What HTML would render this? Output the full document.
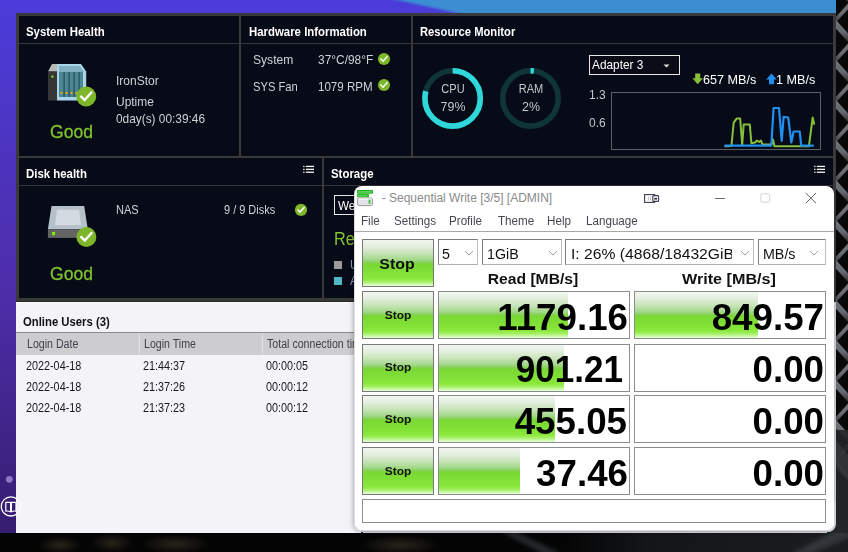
<!DOCTYPE html>
<html><head><meta charset="utf-8">
<style>
*{margin:0;padding:0;box-sizing:border-box}
html,body{width:848px;height:552px;overflow:hidden;background:#000}
body{position:relative;font-family:"Liberation Sans",sans-serif}
.a{position:absolute}
.t{position:absolute;line-height:1;white-space:nowrap}
svg{position:absolute;overflow:visible}
</style></head><body>
<div class="a" style="left:0px;top:0px;width:848px;height:552px;background:linear-gradient(180deg,#4b3cda 0%,#4d32b8 35%,#4e2da8 54%,#371e73 94%,#341c6c 100%)"></div>
<svg style="left:0;top:0" width="848" height="20"><defs><linearGradient id="bl" x1="0" x2="1"><stop offset="0" stop-color="#3f86d8"/><stop offset="1" stop-color="#3a8fd8"/></linearGradient></defs><filter id="bf" x="-5%" y="-50%" width="110%" height="200%"><feGaussianBlur stdDeviation="1.2"/></filter><path d="M379 -4 L852 -4 L852 20 L489 20Z" fill="#3a8ed2" filter="url(#bf)"/></svg>
<svg style="left:836px;top:0;overflow:hidden" width="12" height="552"><defs><clipPath id="rc"><rect width="12" height="552"/></clipPath><linearGradient id="rg" x1="0" y1="0" x2="0" y2="1"><stop offset="0" stop-color="#8c9299"/><stop offset="0.55" stop-color="#7c8288"/><stop offset="1" stop-color="#3a3d40"/></linearGradient></defs><g clip-path="url(#rc)"><rect width="12" height="552" fill="#080808"/><g stroke="url(#rg)" fill="none" opacity="0.8"><path d="M-4 -60 L16 -38" stroke-width="6"/><path d="M-4 -16 L16 -38" stroke-width="4"/><path d="M-4 -20 L16 2" stroke-width="6"/><path d="M-4 24 L16 2" stroke-width="4"/><path d="M-4 20 L16 42" stroke-width="6"/><path d="M-4 64 L16 42" stroke-width="4"/><path d="M-4 60 L16 82" stroke-width="6"/><path d="M-4 104 L16 82" stroke-width="4"/><path d="M-4 100 L16 122" stroke-width="6"/><path d="M-4 144 L16 122" stroke-width="4"/><path d="M-4 140 L16 162" stroke-width="6"/><path d="M-4 184 L16 162" stroke-width="4"/><path d="M-4 180 L16 202" stroke-width="6"/><path d="M-4 224 L16 202" stroke-width="4"/><path d="M-4 220 L16 242" stroke-width="6"/><path d="M-4 264 L16 242" stroke-width="4"/><path d="M-4 260 L16 282" stroke-width="6"/><path d="M-4 304 L16 282" stroke-width="4"/><path d="M-4 300 L16 322" stroke-width="6"/><path d="M-4 344 L16 322" stroke-width="4"/><path d="M-4 340 L16 362" stroke-width="6"/><path d="M-4 384 L16 362" stroke-width="4"/><path d="M-4 380 L16 402" stroke-width="6"/><path d="M-4 424 L16 402" stroke-width="4"/><path d="M-4 420 L16 442" stroke-width="6"/><path d="M-4 464 L16 442" stroke-width="4"/><path d="M-4 460 L16 482" stroke-width="6"/><path d="M-4 504 L16 482" stroke-width="4"/><path d="M-4 500 L16 522" stroke-width="6"/><path d="M-4 544 L16 522" stroke-width="4"/><path d="M-4 540 L16 562" stroke-width="6"/><path d="M-4 584 L16 562" stroke-width="4"/></g><rect y="430" width="12" height="122" fill="#232527" opacity="0.9"/><path d="M0 440 L12 455 L12 480 L0 465Z" fill="#3a3c3e" opacity="0.6"/></g></svg>
<div class="a" style="left:0px;top:533px;width:848px;height:19px;background:#040404"></div>
<svg style="left:0;top:533px" width="848" height="19"><defs><radialGradient id="bg1"><stop offset="0" stop-color="#2c271e" stop-opacity="0.9"/><stop offset="1" stop-color="#2c271e" stop-opacity="0"/></radialGradient><linearGradient id="bg2" x1="0" x2="1"><stop offset="0" stop-color="#040404"/><stop offset="0.3" stop-color="#131517"/><stop offset="1" stop-color="#1b1d1f"/></linearGradient><filter id="bb"><feGaussianBlur stdDeviation="2"/></filter></defs><rect x="560" y="0" width="288" height="19" fill="url(#bg2)"/><ellipse cx="60" cy="12" rx="22" ry="9" fill="url(#bg1)"/><ellipse cx="112" cy="10" rx="22" ry="10" fill="url(#bg1)"/><ellipse cx="175" cy="11" rx="35" ry="10" fill="url(#bg1)"/><ellipse cx="400" cy="12" rx="40" ry="10" fill="url(#bg1)"/><path d="M500 -2 L514 -2 L562 21 L544 21Z" fill="#596068" opacity="0.4" filter="url(#bb)"/><path d="M790 21 L850 -10 L850 4 L812 21Z" fill="#50555a" opacity="0.45" filter="url(#bb)"/></svg>
<div class="a" style="left:16px;top:13px;width:820px;height:289px;background:#393939"></div>
<div class="a" style="left:16px;top:301px;width:820px;height:1px;background:#262626"></div>
<div class="a" style="left:19px;top:16px;width:220px;height:140px;background:#070a17"></div>
<div class="a" style="left:241px;top:16px;width:170px;height:140px;background:#070a17"></div>
<div class="a" style="left:413px;top:16px;width:420px;height:140px;background:#070a17"></div>
<div class="a" style="left:19px;top:158px;width:303px;height:140px;background:#070a17"></div>
<div class="a" style="left:324px;top:158px;width:509px;height:140px;background:#070a17"></div>
<div class="a" style="left:19px;top:43px;width:220px;height:1px;background:#36373e"></div>
<div class="a" style="left:241px;top:43px;width:170px;height:1px;background:#36373e"></div>
<div class="a" style="left:413px;top:43px;width:420px;height:1px;background:#36373e"></div>
<div class="a" style="left:19px;top:185px;width:303px;height:1px;background:#36373e"></div>
<div class="a" style="left:324px;top:185px;width:509px;height:1px;background:#36373e"></div>
<div class="t" style="left:26px;top:25.00px;font-size:13px;color:#fff;font-weight:bold;transform:scaleX(0.878);transform-origin:0 0;">System Health</div>
<div class="t" style="left:116px;top:74.00px;font-size:13px;color:#cfd2d6;transform:scaleX(0.925);transform-origin:0 0;">IronStor</div>
<div class="t" style="left:116px;top:95.00px;font-size:13px;color:#cfd2d6;transform:scaleX(0.92);transform-origin:0 0;">Uptime</div>
<div class="t" style="left:116px;top:112.00px;font-size:13px;color:#cfd2d6;transform:scaleX(0.913);transform-origin:0 0;">0day(s) 00:39:46</div>
<div class="t" style="left:49.8px;top:121.62px;font-size:19px;color:#7fc42e;transform:scaleX(0.925);transform-origin:0 0;-webkit-text-stroke:0.3px #7fc42e;">Good</div>
<svg style="left:0;top:0" width="120" height="120"><path d="M48 71.6 L52 64 L57 64 L57 71.6Z" fill="#b8b8b8"/><rect x="48" y="71.6" width="9" height="29" fill="#363636"/><circle cx="52.4" cy="76.6" r="1.3" fill="#6ccc28"/><path d="M57 64 L81 64 L86.2 71.6 L86.2 100.6 L57 100.6Z" fill="#a9d5ea"/><path d="M59 66 L80 66 L84 72 L59 72Z" fill="#7fb0bf"/><rect x="59" y="72" width="24" height="25" fill="#4d8794"/><rect x="63.5" y="72" width="1.2" height="25" fill="#1e4f58"/><rect x="68.5" y="72" width="1.2" height="25" fill="#1e4f58"/><rect x="73.5" y="72" width="1.2" height="25" fill="#1e4f58"/><rect x="78.5" y="72" width="1.2" height="25" fill="#1e4f58"/><rect x="60.5" y="92" width="2" height="2" fill="#f0a800"/><rect x="65.5" y="92" width="2" height="2" fill="#f0a800"/><rect x="70.5" y="92" width="2" height="2" fill="#f0a800"/><rect x="75.5" y="92" width="2" height="2" fill="#f0a800"/><circle cx="86.2" cy="96.5" r="10" fill="#7db52b"/><path d="M81.20 96.70 L84.60 100.10 L91.20 92.70" stroke="#fff" stroke-width="2.40" fill="none" stroke-linecap="square"/></svg>
<div class="t" style="left:248.5px;top:25.00px;font-size:13px;color:#fff;font-weight:bold;transform:scaleX(0.877);transform-origin:0 0;">Hardware Information</div>
<div class="t" style="left:253.4px;top:53.00px;font-size:13px;color:#cfd2d6;transform:scaleX(0.93);transform-origin:0 0;">System</div>
<div class="t" style="left:317.8px;top:53.00px;font-size:13px;color:#cfd2d6;transform:scaleX(0.917);transform-origin:0 0;">37°C/98°F</div>
<div class="t" style="left:253.4px;top:79.70px;font-size:13px;color:#cfd2d6;transform:scaleX(0.86);transform-origin:0 0;">SYS Fan</div>
<div class="t" style="left:317.8px;top:79.70px;font-size:13px;color:#cfd2d6;transform:scaleX(0.89);transform-origin:0 0;">1079 RPM</div>
<svg style="left:0;top:0" width="400" height="100"><circle cx="384" cy="59" r="6.1" fill="#7db52b"/><path d="M380.95 59.12 L383.02 61.20 L387.05 56.68" stroke="#fff" stroke-width="1.46" fill="none" stroke-linecap="square"/><circle cx="384" cy="85" r="6.1" fill="#7db52b"/><path d="M380.95 85.12 L383.02 87.20 L387.05 82.68" stroke="#fff" stroke-width="1.46" fill="none" stroke-linecap="square"/></svg>
<div class="t" style="left:420.3px;top:25.00px;font-size:13px;color:#fff;font-weight:bold;transform:scaleX(0.862);transform-origin:0 0;">Resource Monitor</div>
<svg style="left:0;top:0" width="600" height="140"><circle cx="452.6" cy="98.4" r="27.7" fill="none" stroke="#0f3539" stroke-width="5.6"/><circle cx="452.6" cy="98.4" r="27.7" fill="none" stroke="#2fd6da" stroke-width="5.6" stroke-dasharray="137.49 174.04" transform="rotate(-90 452.6 98.4)"/><circle cx="530.5" cy="98.4" r="27.7" fill="none" stroke="#0f3539" stroke-width="5.6"/><circle cx="530.5" cy="98.4" r="27.7" fill="none" stroke="#2fd6da" stroke-width="5.6" stroke-dasharray="3.48 174.04" transform="rotate(-90 530.5 98.4)"/></svg>
<div class="t" style="left:252.60000000000002px;width:400px;text-align:center;top:82.94px;font-size:12px;color:#c4c6ca;transform:scaleX(0.92);transform-origin:50% 0;">CPU</div>
<div class="t" style="left:252.60000000000002px;width:400px;text-align:center;top:99.67px;font-size:13.5px;color:#c4c6ca;transform:scaleX(0.92);transform-origin:50% 0;">79%</div>
<div class="t" style="left:330.5px;width:400px;text-align:center;top:82.94px;font-size:12px;color:#c4c6ca;transform:scaleX(0.92);transform-origin:50% 0;">RAM</div>
<div class="t" style="left:330.5px;width:400px;text-align:center;top:99.67px;font-size:13.5px;color:#c4c6ca;transform:scaleX(0.92);transform-origin:50% 0;">2%</div>
<div class="a" style="left:589px;top:55px;width:91px;height:20px;border:1px solid #e8e8e8;background:#0a0b16"></div>
<div class="t" style="left:592.4px;top:58.00px;font-size:13px;color:#fff;transform:scaleX(0.91);transform-origin:0 0;">Adapter 3</div>
<svg style="left:0;top:0" width="700" height="100"><path d="M663.5 64.5 L669.5 64.5 L666.5 67.5Z" fill="#ddd"/></svg>
<svg style="left:0;top:0" width="800" height="100"><path d="M695.2 73.5 L700.2 73.5 L700.2 78.2 L703 78.2 L697.7 84.3 L692.4 78.2 L695.2 78.2Z" fill="#86c03a"/><path d="M769 84.3 L774 84.3 L774 79.6 L776.8 79.6 L771.5 73.5 L766.2 79.6 L769 79.6Z" fill="#1f8ff0"/></svg>
<div class="t" style="left:703.4px;top:73.10px;font-size:13px;color:#fff;transform:scaleX(0.97);transform-origin:0 0;">657 MB/s</div>
<div class="t" style="left:776.4px;top:73.10px;font-size:13px;color:#fff;transform:scaleX(0.97);transform-origin:0 0;">1 MB/s</div>
<div class="t" style="left:589px;top:88.00px;font-size:13px;color:#c4c6ca;transform:scaleX(0.92);transform-origin:0 0;">1.3</div>
<div class="t" style="left:589px;top:116.00px;font-size:13px;color:#c4c6ca;transform:scaleX(0.92);transform-origin:0 0;">0.6</div>
<div class="a" style="left:611px;top:92px;width:210px;height:58px;border:1px solid #5a6068"></div>
<svg style="left:0;top:0" width="848" height="160"><polyline points="724.5,146.3 731.4,146.0 733.7,122.6 736.8,118.4 740.2,118.6 742.2,144.8 743.7,124.6 749.8,124.6 751.4,143.3 755.0,142.5 757.0,140.5 759.0,142.0 761.0,140.5 762.5,144.5 771.3,144.5 773.0,139.4 774.5,146.3 808.9,146.3 812.7,117.5 814.3,124.6" fill="none" stroke="#86c03a" stroke-width="2" stroke-linejoin="round"/><polyline points="724.5,145.6 771.3,145.6 773.6,108.0 779.0,108.0 781.7,141.0 783.6,116.9 788.2,117.5 791.3,142.5 793.6,131.5 799.7,131.5 801.2,145.6 813.8,145.6" fill="none" stroke="#1f8ff0" stroke-width="2.2" stroke-linejoin="round"/></svg>
<div class="t" style="left:26px;top:166.70px;font-size:13px;color:#fff;font-weight:bold;transform:scaleX(0.878);transform-origin:0 0;">Disk health</div>
<svg style="left:0;top:0" width="848" height="200"><rect x="303.2" y="165.80" width="1.3" height="1.3" fill="#fff"/><rect x="305.8" y="165.80" width="8.2" height="1.25" fill="#fff"/><rect x="303.2" y="168.70" width="1.3" height="1.3" fill="#fff"/><rect x="305.8" y="168.70" width="8.2" height="1.25" fill="#fff"/><rect x="303.2" y="171.60" width="1.3" height="1.3" fill="#fff"/><rect x="305.8" y="171.60" width="8.2" height="1.25" fill="#fff"/><rect x="814.2" y="165.80" width="1.3" height="1.3" fill="#fff"/><rect x="816.8" y="165.80" width="8.2" height="1.25" fill="#fff"/><rect x="814.2" y="168.70" width="1.3" height="1.3" fill="#fff"/><rect x="816.8" y="168.70" width="8.2" height="1.25" fill="#fff"/><rect x="814.2" y="171.60" width="1.3" height="1.3" fill="#fff"/><rect x="816.8" y="171.60" width="8.2" height="1.25" fill="#fff"/></svg>
<div class="t" style="left:116.4px;top:203.84px;font-size:12px;color:#cfd2d6;transform:scaleX(0.92);transform-origin:0 0;">NAS</div>
<div class="t" style="left:224.2px;top:203.84px;font-size:12px;color:#cfd2d6;transform:scaleX(0.913);transform-origin:0 0;">9 / 9 Disks</div>
<svg style="left:0;top:0" width="400" height="300"><path d="M51.5 206 L84.2 206 L87.8 229.3 L47.9 229.3Z" fill="#b5c0c8"/><path d="M57 209.8 L79 209.8 L81 225 L55.1 225Z" fill="#d3dae0"/><rect x="47.9" y="229.3" width="39.9" height="8.6" fill="#646464"/><rect x="52" y="232" width="3.1" height="3.2" fill="#78f000"/><circle cx="86.4" cy="237" r="10" fill="#7db52b"/><path d="M81.40 237.20 L84.80 240.60 L91.40 233.20" stroke="#fff" stroke-width="2.40" fill="none" stroke-linecap="square"/><circle cx="301" cy="209.9" r="6.1" fill="#7db52b"/><path d="M297.95 210.02 L300.02 212.10 L304.05 207.58" stroke="#fff" stroke-width="1.46" fill="none" stroke-linecap="square"/></svg>
<div class="t" style="left:49.8px;top:263.62px;font-size:19px;color:#7fc42e;transform:scaleX(0.925);transform-origin:0 0;-webkit-text-stroke:0.3px #7fc42e;">Good</div>
<div class="t" style="left:331px;top:166.50px;font-size:13px;color:#fff;font-weight:bold;transform:scaleX(0.878);transform-origin:0 0;">Storage</div>
<div class="a" style="left:334px;top:195px;width:40px;height:20px;border:1px solid #e8e8e8"></div>
<div class="t" style="left:338px;top:199.00px;font-size:13px;color:#fff;transform:scaleX(0.9);transform-origin:0 0;">We</div>
<div class="t" style="left:333.6px;top:229.76px;font-size:18px;color:#7fc42e;transform:scaleX(0.9);transform-origin:0 0;">Re</div>
<div class="a" style="left:334px;top:261px;width:8px;height:8px;background:#9a9a9a"></div>
<div class="a" style="left:334px;top:277px;width:8px;height:8px;background:#4fb8c4"></div>
<div class="t" style="left:350px;top:258.00px;font-size:13px;color:#8aa0c0;transform:scaleX(0.9);transform-origin:0 0;">U</div>
<div class="t" style="left:350px;top:274.00px;font-size:13px;color:#8aa0c0;transform:scaleX(0.9);transform-origin:0 0;">A</div>
<div class="a" style="left:16px;top:302px;width:345px;height:231px;background:#f3f3f8"></div>
<div class="a" style="left:16px;top:302px;width:345px;height:1px;background:#fcfcff"></div>
<div class="t" style="left:23px;top:314.70px;font-size:13px;color:#111;font-weight:bold;transform:scaleX(0.87);transform-origin:0 0;">Online Users (3)</div>
<div class="a" style="left:16px;top:332px;width:345px;height:1px;background:#8a8a8a"></div>
<div class="a" style="left:16px;top:333px;width:345px;height:22px;background:#cdcdcf"></div>
<div class="a" style="left:139px;top:333px;width:1px;height:22px;background:#e2e2e4"></div>
<div class="a" style="left:262px;top:333px;width:1px;height:22px;background:#e2e2e4"></div>
<div class="t" style="left:27.2px;top:338.34px;font-size:12px;color:#40404a;transform:scaleX(0.885);transform-origin:0 0;">Login Date</div>
<div class="t" style="left:144px;top:338.34px;font-size:12px;color:#40404a;transform:scaleX(0.885);transform-origin:0 0;">Login Time</div>
<div class="t" style="left:267px;top:338.34px;font-size:12px;color:#40404a;transform:scaleX(0.885);transform-origin:0 0;">Total connection time</div>
<div class="t" style="left:26px;top:360.04px;font-size:12px;color:#16161e;transform:scaleX(0.9);transform-origin:0 0;">2022-04-18</div>
<div class="t" style="left:143px;top:360.04px;font-size:12px;color:#16161e;transform:scaleX(0.9);transform-origin:0 0;">21:44:37</div>
<div class="t" style="left:266px;top:360.04px;font-size:12px;color:#16161e;transform:scaleX(0.9);transform-origin:0 0;">00:00:05</div>
<div class="t" style="left:26px;top:381.04px;font-size:12px;color:#16161e;transform:scaleX(0.9);transform-origin:0 0;">2022-04-18</div>
<div class="t" style="left:143px;top:381.04px;font-size:12px;color:#16161e;transform:scaleX(0.9);transform-origin:0 0;">21:37:26</div>
<div class="t" style="left:266px;top:381.04px;font-size:12px;color:#16161e;transform:scaleX(0.9);transform-origin:0 0;">00:00:12</div>
<div class="t" style="left:26px;top:402.04px;font-size:12px;color:#16161e;transform:scaleX(0.9);transform-origin:0 0;">2022-04-18</div>
<div class="t" style="left:143px;top:402.04px;font-size:12px;color:#16161e;transform:scaleX(0.9);transform-origin:0 0;">21:37:23</div>
<div class="t" style="left:266px;top:402.04px;font-size:12px;color:#16161e;transform:scaleX(0.9);transform-origin:0 0;">00:00:12</div>
<svg style="left:0;top:0" width="40" height="552"><circle cx="9.3" cy="479.3" r="3.4" fill="#8a78c4"/><circle cx="10.9" cy="506.4" r="9.6" fill="none" stroke="#fff" stroke-width="1.3"/><path d="M5.8 502.3 L10.6 502.3 L10.6 511.8 Q8.2 510.6 5.8 511.2Z M11.4 502.3 L16 502.3 L16 511.2 Q13.6 510.6 11.4 511.8Z" fill="none" stroke="#fff" stroke-width="1.2" stroke-linejoin="round"/></svg>
<div class="a" style="left:800px;top:480px;width:48px;height:53px;background:#232527"></div>
<div class="a" style="left:834px;top:302px;width:2px;height:222px;background:#cfcfd3"></div>
<div class="a" style="left:354px;top:186px;width:480px;height:346px;border-radius:8px;box-shadow:-1px 0 5px rgba(0,0,0,0.28)"></div>
<div class="a" style="left:354px;top:186px;width:482px;height:346px;border-radius:8px;background:#cfcfd3;clip-path:inset(316px 0 0 0)"></div>
<div class="a" style="left:354px;top:186px;width:480px;height:345px;border-radius:8px;background:#ffffff;border:1px solid #dcdce0;border-right:none;border-top:none"></div>
<svg style="left:0;top:0" width="400" height="220"><rect x="357" y="190" width="16" height="3.8" rx="0.8" fill="#20b420"/><rect x="358" y="191.3" width="14" height="1.2" fill="#8fe08f" opacity="0.8"/><rect x="357" y="194" width="12" height="3.2" rx="0.6" fill="#26ba26"/><rect x="358" y="195.2" width="9" height="1.1" fill="#8fe08f" opacity="0.7"/><rect x="357.4" y="198" width="15.2" height="7.6" rx="1.8" fill="#e2e2ea" stroke="#909090" stroke-width="0.9"/><rect x="358.5" y="198.4" width="13" height="1.6" fill="#f4f4f8"/><rect x="368.6" y="199.6" width="1.8" height="4.2" fill="#3cbf3c"/></svg>
<div class="t" style="left:381.7px;top:192.34px;font-size:12px;color:#8a8a8a;">- Sequential Write [3/5] [ADMIN]</div>
<svg style="left:0;top:0" width="848" height="220"><rect x="644.6" y="194.6" width="10" height="7.8" fill="none" stroke="#3a3d50" stroke-width="1.1"/><line x1="648.4" y1="196.5" x2="648.4" y2="200.5" stroke="#9a9ca8" stroke-width="0.6"/><line x1="650.6" y1="196.5" x2="650.6" y2="200.5" stroke="#9a9ca8" stroke-width="0.6"/><rect x="652.8" y="195.6" width="5.8" height="5.8" rx="1" fill="#fff" stroke="#3a3d50" stroke-width="1.1"/><rect x="654.2" y="197.8" width="3" height="1.8" fill="#3a3d50"/><line x1="715" y1="198.5" x2="725" y2="198.5" stroke="#6e6e6e" stroke-width="1"/><rect x="760.8" y="193.8" width="8.8" height="8.4" rx="1.3" fill="none" stroke="#d6d6d6" stroke-width="1"/><path d="M805.8 193 L816 203.2 M816 193 L805.8 203.2" stroke="#5a5a5a" stroke-width="0.95"/></svg>
<div class="t" style="left:361px;top:214.74px;font-size:12px;color:#474754;transform:scaleX(0.97);transform-origin:0 0;">File</div>
<div class="t" style="left:393.6px;top:214.74px;font-size:12px;color:#474754;transform:scaleX(0.97);transform-origin:0 0;">Settings</div>
<div class="t" style="left:449.4px;top:214.74px;font-size:12px;color:#474754;transform:scaleX(0.97);transform-origin:0 0;">Profile</div>
<div class="t" style="left:497.8px;top:214.74px;font-size:12px;color:#474754;transform:scaleX(0.97);transform-origin:0 0;">Theme</div>
<div class="t" style="left:547px;top:214.74px;font-size:12px;color:#474754;transform:scaleX(0.97);transform-origin:0 0;">Help</div>
<div class="t" style="left:586px;top:214.74px;font-size:12px;color:#474754;transform:scaleX(0.97);transform-origin:0 0;">Language</div>
<div class="a" style="left:354px;top:231px;width:480px;height:1px;background:#a8a8a8"></div>
<div class="a" style="left:355px;top:232px;width:479px;height:298px;background:#ffffff;border-radius:0 0 7px 7px"></div>
<div class="a" style="left:362px;top:531px;width:466px;height:1px;background:#b4b4b8"></div>
<div class="a" style="left:363px;top:532px;width:464px;height:1px;background:#c6c6cc"></div>
<div class="a" style="left:362px;top:239px;width:72px;height:48px;border:1px solid #787878;background:linear-gradient(180deg,#f2f5f0 0%,#e4efdf 14%,#c6e3b6 30%,#a2d889 43%,#86d256 49%,#7ad834 53%,#80df36 68%,#8ae83a 84%,#a6ef68 91%,#d2fbb8 97%,#e6ffd8 100%)"></div>
<div class="t" style="left:197.39999999999998px;width:400px;text-align:center;top:256.10px;font-size:15px;color:#111;font-weight:bold;transform:scaleX(1.06);transform-origin:50% 0;">Stop</div>
<div class="a" style="left:438px;top:239px;width:40px;height:26px;border:1px solid;border-color:#7c7c7c #bdbdbd #b0b0b0 #7c7c7c;background:#fff"></div>
<div class="t" style="left:442.4px;top:246.30px;font-size:15px;color:#111;transform:scaleX(0.95);transform-origin:0 0;">5</div>
<svg style="left:0;top:0" width="848" height="300"><path d="M465 251 L469 255 L473 251" fill="none" stroke="#a0a0a0" stroke-width="1"/></svg>
<div class="a" style="left:482px;top:239px;width:80px;height:26px;border:1px solid;border-color:#7c7c7c #bdbdbd #b0b0b0 #7c7c7c;background:#fff"></div>
<div class="t" style="left:487.4px;top:246.30px;font-size:15px;color:#111;transform:scaleX(0.95);transform-origin:0 0;">1GiB</div>
<svg style="left:0;top:0" width="848" height="300"><path d="M549 251 L553 255 L557 251" fill="none" stroke="#a0a0a0" stroke-width="1"/></svg>
<div class="a" style="left:565px;top:239px;width:189px;height:26px;border:1px solid;border-color:#7c7c7c #bdbdbd #b0b0b0 #7c7c7c;background:#fff"></div>
<div class="a" style="left:566px;top:240px;width:166px;height:24px;overflow:hidden">
<div class="t" style="left:5px;top:6.30px;font-size:15px;color:#111;transform:scaleX(1.045);transform-origin:0 0;">I: 26% (4868/18432GiB)</div>
</div>
<svg style="left:0;top:0" width="848" height="300"><path d="M741 251 L745 255 L749 251" fill="none" stroke="#a0a0a0" stroke-width="1"/></svg>
<div class="a" style="left:758px;top:239px;width:68px;height:26px;border:1px solid;border-color:#7c7c7c #bdbdbd #b0b0b0 #7c7c7c;background:#fff"></div>
<div class="t" style="left:762.6px;top:246.30px;font-size:15px;color:#111;transform:scaleX(0.95);transform-origin:0 0;">MB/s</div>
<svg style="left:0;top:0" width="848" height="300"><path d="M810 251 L814 255 L818 251" fill="none" stroke="#a0a0a0" stroke-width="1"/></svg>
<div class="t" style="left:333px;width:400px;text-align:center;top:271.75px;font-size:14px;color:#111;font-weight:bold;transform:scaleX(1.12);transform-origin:50% 0;">Read [MB/s]</div>
<div class="t" style="left:529.2px;width:400px;text-align:center;top:271.75px;font-size:14px;color:#111;font-weight:bold;transform:scaleX(1.154);transform-origin:50% 0;">Write [MB/s]</div>
<div class="a" style="left:362px;top:291px;width:72px;height:48px;border:1px solid #787878;background:linear-gradient(180deg,#f2f5f0 0%,#e4efdf 14%,#c6e3b6 30%,#a2d889 43%,#86d256 49%,#7ad834 53%,#80df36 68%,#8ae83a 84%,#a6ef68 91%,#d2fbb8 97%,#e6ffd8 100%)"></div>
<div class="t" style="left:198.2px;width:400px;text-align:center;top:309.67px;font-size:11.5px;color:#111;font-weight:bold;transform:scaleX(1.04);transform-origin:50% 0;">Stop</div>
<div class="a" style="left:438px;top:291px;width:192px;height:48px;border:1px solid #8c8c8c;background:#fff"></div>
<div class="a" style="left:439px;top:292px;width:129px;height:46px;background:linear-gradient(180deg,#f2f5f0 0%,#e4efdf 14%,#c6e3b6 30%,#a2d889 43%,#86d256 49%,#7ad834 53%,#80df36 68%,#8ae83a 84%,#a6ef68 91%,#d2fbb8 97%,#e6ffd8 100%)"></div>
<div class="t" style="left:227.89999999999998px;width:400px;text-align:right;top:299.73px;font-size:36px;color:#000;font-weight:bold;transform:scaleX(1.02);transform-origin:100% 0;">1179.16</div>
<div class="a" style="left:634px;top:291px;width:192px;height:48px;border:1px solid #8c8c8c;background:#fff"></div>
<div class="a" style="left:635px;top:292px;width:123px;height:46px;background:linear-gradient(180deg,#f2f5f0 0%,#e4efdf 14%,#c6e3b6 30%,#a2d889 43%,#86d256 49%,#7ad834 53%,#80df36 68%,#8ae83a 84%,#a6ef68 91%,#d2fbb8 97%,#e6ffd8 100%)"></div>
<div class="t" style="left:423.5px;width:400px;text-align:right;top:299.73px;font-size:36px;color:#000;font-weight:bold;transform:scaleX(1.02);transform-origin:100% 0;">849.57</div>
<div class="a" style="left:362px;top:343.5px;width:72px;height:48px;border:1px solid #787878;background:linear-gradient(180deg,#f2f5f0 0%,#e4efdf 14%,#c6e3b6 30%,#a2d889 43%,#86d256 49%,#7ad834 53%,#80df36 68%,#8ae83a 84%,#a6ef68 91%,#d2fbb8 97%,#e6ffd8 100%)"></div>
<div class="t" style="left:198.2px;width:400px;text-align:center;top:362.17px;font-size:11.5px;color:#111;font-weight:bold;transform:scaleX(1.04);transform-origin:50% 0;">Stop</div>
<div class="a" style="left:438px;top:343.5px;width:192px;height:48px;border:1px solid #8c8c8c;background:#fff"></div>
<div class="a" style="left:439px;top:344.5px;width:125px;height:46px;background:linear-gradient(180deg,#f2f5f0 0%,#e4efdf 14%,#c6e3b6 30%,#a2d889 43%,#86d256 49%,#7ad834 53%,#80df36 68%,#8ae83a 84%,#a6ef68 91%,#d2fbb8 97%,#e6ffd8 100%)"></div>
<div class="t" style="left:222.79999999999995px;width:400px;text-align:right;top:352.23px;font-size:36px;color:#000;font-weight:bold;transform:scaleX(0.975);transform-origin:100% 0;">901.21</div>
<div class="a" style="left:634px;top:343.5px;width:192px;height:48px;border:1px solid #8c8c8c;background:#fff"></div>
<div class="t" style="left:423.5px;width:400px;text-align:right;top:352.23px;font-size:36px;color:#000;font-weight:bold;transform:scaleX(1.02);transform-origin:100% 0;">0.00</div>
<div class="a" style="left:362px;top:395px;width:72px;height:48px;border:1px solid #787878;background:linear-gradient(180deg,#f2f5f0 0%,#e4efdf 14%,#c6e3b6 30%,#a2d889 43%,#86d256 49%,#7ad834 53%,#80df36 68%,#8ae83a 84%,#a6ef68 91%,#d2fbb8 97%,#e6ffd8 100%)"></div>
<div class="t" style="left:198.2px;width:400px;text-align:center;top:413.67px;font-size:11.5px;color:#111;font-weight:bold;transform:scaleX(1.04);transform-origin:50% 0;">Stop</div>
<div class="a" style="left:438px;top:395px;width:192px;height:48px;border:1px solid #8c8c8c;background:#fff"></div>
<div class="a" style="left:439px;top:396px;width:116px;height:46px;background:linear-gradient(180deg,#f2f5f0 0%,#e4efdf 14%,#c6e3b6 30%,#a2d889 43%,#86d256 49%,#7ad834 53%,#80df36 68%,#8ae83a 84%,#a6ef68 91%,#d2fbb8 97%,#e6ffd8 100%)"></div>
<div class="t" style="left:227.29999999999995px;width:400px;text-align:right;top:403.73px;font-size:36px;color:#000;font-weight:bold;transform:scaleX(1.02);transform-origin:100% 0;">455.05</div>
<div class="a" style="left:634px;top:395px;width:192px;height:48px;border:1px solid #8c8c8c;background:#fff"></div>
<div class="t" style="left:423.5px;width:400px;text-align:right;top:403.73px;font-size:36px;color:#000;font-weight:bold;transform:scaleX(1.02);transform-origin:100% 0;">0.00</div>
<div class="a" style="left:362px;top:447px;width:72px;height:48px;border:1px solid #787878;background:linear-gradient(180deg,#f2f5f0 0%,#e4efdf 14%,#c6e3b6 30%,#a2d889 43%,#86d256 49%,#7ad834 53%,#80df36 68%,#8ae83a 84%,#a6ef68 91%,#d2fbb8 97%,#e6ffd8 100%)"></div>
<div class="t" style="left:198.2px;width:400px;text-align:center;top:465.67px;font-size:11.5px;color:#111;font-weight:bold;transform:scaleX(1.04);transform-origin:50% 0;">Stop</div>
<div class="a" style="left:438px;top:447px;width:192px;height:48px;border:1px solid #8c8c8c;background:#fff"></div>
<div class="a" style="left:439px;top:448px;width:81px;height:46px;background:linear-gradient(180deg,#f2f5f0 0%,#e4efdf 14%,#c6e3b6 30%,#a2d889 43%,#86d256 49%,#7ad834 53%,#80df36 68%,#8ae83a 84%,#a6ef68 91%,#d2fbb8 97%,#e6ffd8 100%)"></div>
<div class="t" style="left:227.89999999999998px;width:400px;text-align:right;top:455.73px;font-size:36px;color:#000;font-weight:bold;transform:scaleX(1.02);transform-origin:100% 0;">37.46</div>
<div class="a" style="left:634px;top:447px;width:192px;height:48px;border:1px solid #8c8c8c;background:#fff"></div>
<div class="t" style="left:423.5px;width:400px;text-align:right;top:455.73px;font-size:36px;color:#000;font-weight:bold;transform:scaleX(1.02);transform-origin:100% 0;">0.00</div>
<div class="a" style="left:362px;top:499px;width:464px;height:24px;border:1px solid #8c8c8c;background:#fff"></div>
</body></html>
